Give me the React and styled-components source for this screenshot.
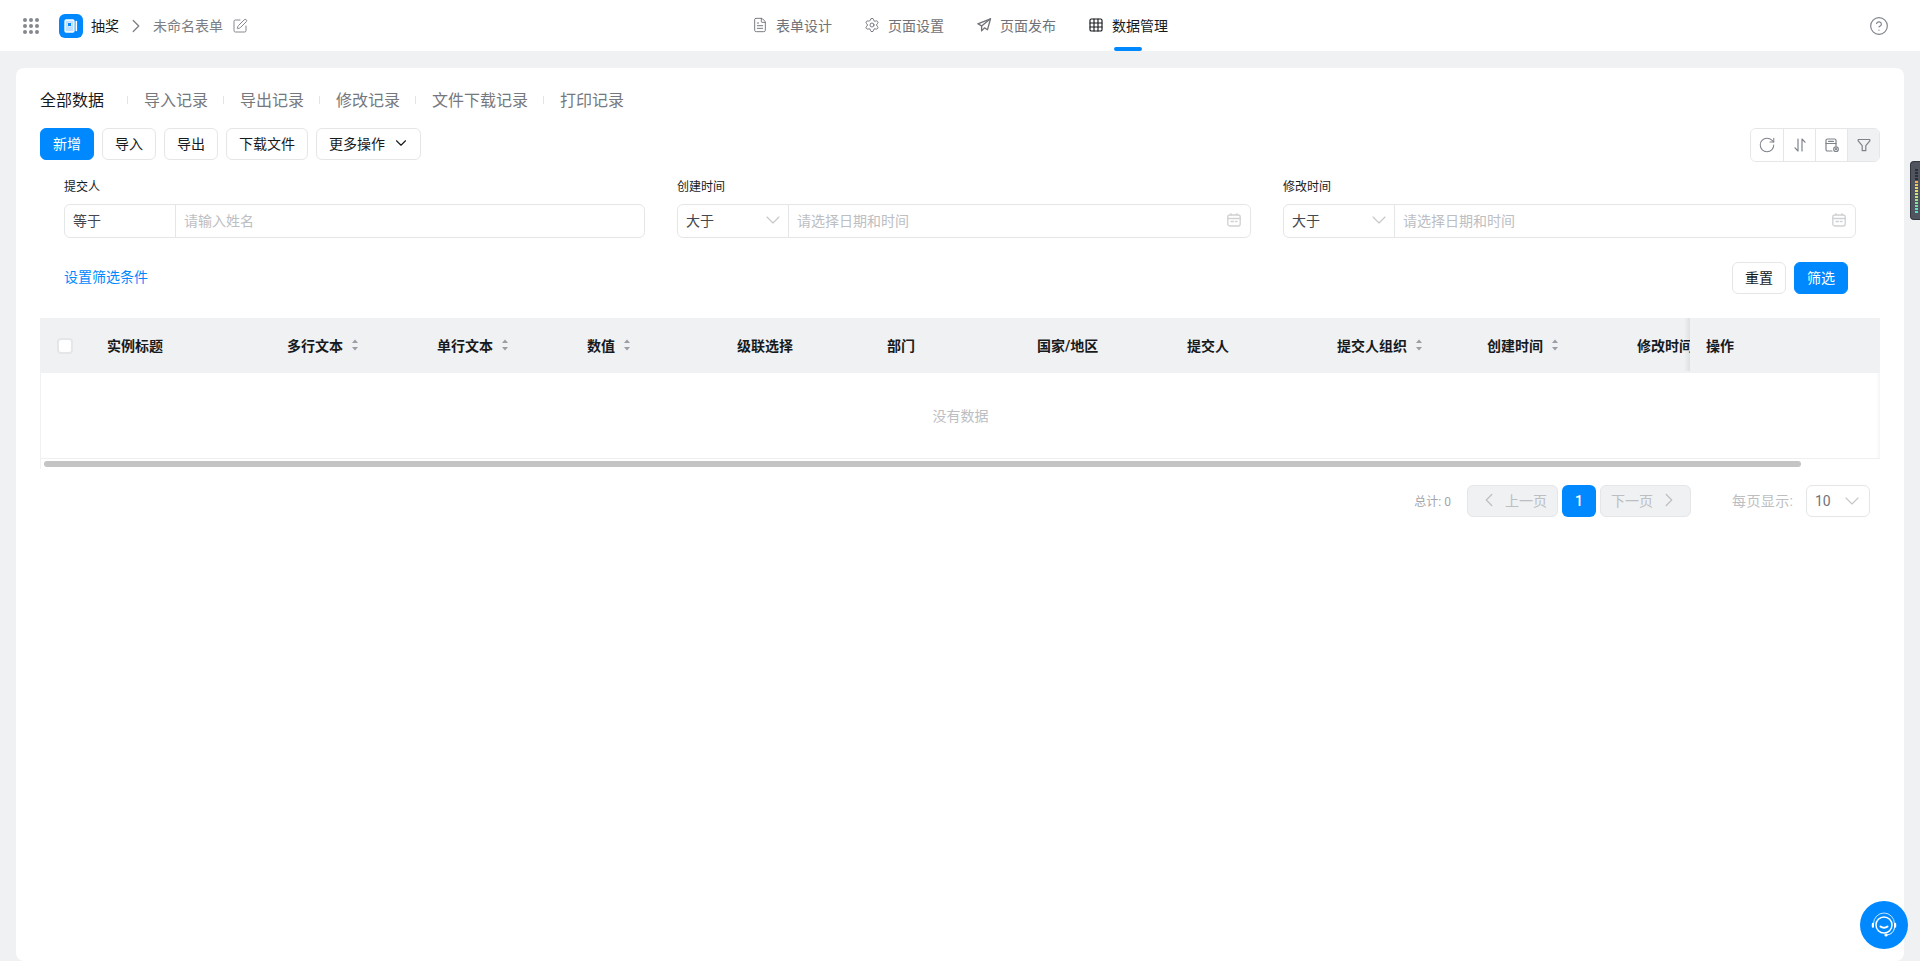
import React from 'react'
import styled, { createGlobalStyle } from 'styled-components'
import { ChevronDown, ChevronLeft, ChevronRight, CircleHelp, FileText, Grid3x3, RotateCw, Settings, SquarePen } from 'lucide-react'

const GlobalStyle = createGlobalStyle`
  html, body {
    margin: 0;
    height: 100%;
    overflow: hidden;
  }
  body {
    font-family: Roboto, "Noto Sans CJK SC", sans-serif;
    font-size: 14px;
    color: #171a1d;
  }
  * {
    box-sizing: border-box;
  }
`

const Page = styled.div`
  position: relative;
  height: 961px;
  display: flex;
  flex-direction: column;
  background: #f0f1f3;
`

const TopBar = styled.header`
  flex: 0 0 51px;
  display: grid;
  grid-template-columns: 1fr auto 1fr;
  align-items: center;
  padding: 0 23px;
  background: #fff;
`

const Crumbs = styled.div`
  display: flex;
  align-items: center;
`

const AppsGrid = styled.div`
  display: grid;
  grid-template-columns: repeat(3, 4px);
  gap: 2px;
  margin-right: 20px;

  span {
    width: 4px;
    height: 4px;
    border-radius: 50%;
    background: #85888e;
  }
`

const Logo = styled.div`
  width: 24px;
  height: 24px;
  display: flex;
  border-radius: 6px;
  background: #0089ff;
  margin-right: 8px;
`

const AppName = styled.span`
  padding-bottom: 2px;
  color: #171a1d;
`

const FormName = styled.span`
  padding-bottom: 2px;
  margin-right: 9px;
  color: #7c7f85;
`

const Nav = styled.nav`
  display: flex;
  gap: 32px;
  height: 51px;
`

const NavItem = styled.a`
  position: relative;
  display: flex;
  align-items: center;
  gap: 8px;
  padding-bottom: 1px;
  color: ${(p) => (p.$active ? '#171a1d' : '#6f7278')};

  &::after {
    content: '';
    display: ${(p) => (p.$active ? 'block' : 'none')};
    position: absolute;
    left: 26px;
    bottom: 0;
    width: 28px;
    height: 4px;
    border-radius: 2px;
    background: #0089ff;
  }
`

const HelpSlot = styled.div`
  display: flex;
  justify-content: flex-end;
  padding-right: 8px;
  color: #7f838a;
`

const Card = styled.main`
  flex: 1;
  margin: 17px 16px 0;
  padding: 20px 24px 0;
  border-radius: 8px;
  background: #fff;
`

const Tabs = styled.div`
  display: flex;
  align-items: center;
  height: 24px;
  padding-bottom: 3px;
  margin-bottom: 16px;
`

const Tab = styled.span`
  font-size: 16px;
  color: ${(p) => (p.$active ? '#171a1d' : '#75787e')};
`

const TabDivider = styled.i`
  width: 1px;
  height: 8px;
  margin: 3px 16px 0 ${(p) => (p.$first ? 23 : 15)}px;
  background: #e3e4e6;
`

const Toolbar = styled.div`
  display: flex;
  justify-content: space-between;
  align-items: flex-start;
  height: 34px;
`

const ButtonRow = styled.div`
  display: flex;
  gap: 8px;
`

const Button = styled.button`
  height: 32px;
  min-width: 54px;
  display: inline-flex;
  align-items: center;
  justify-content: center;
  gap: 7px;
  padding: 0 ${(p) => (p.$menu ? 10 : 12)}px 2px 12px;
  font: inherit;
  border-radius: 6px;
  border: 1px solid ${(p) => (p.$primary ? '#0089ff' : '#e5e6e8')};
  background: ${(p) => (p.$primary ? '#0089ff' : '#fff')};
  color: ${(p) => (p.$primary ? '#fff' : '#171a1d')};
`

const IconGroup = styled.div`
  display: flex;
  height: 34px;
  border: 1px solid #e5e6e8;
  border-radius: 6px;
  overflow: hidden;
`

const IconCell = styled.div`
  width: 32px;
  display: flex;
  align-items: center;
  justify-content: center;
  color: #7f838a;
  background: ${(p) => (p.$active ? '#f0f1f3' : '#fff')};

  & + & {
    border-left: 1px solid #e5e6e8;
  }
`

const FilterGrid = styled.div`
  display: grid;
  grid-template-columns: 581px 574px 573px;
  column-gap: 32px;
  margin: 16px 24px 0;
`

const FieldLabel = styled.label`
  display: block;
  height: 18px;
  margin-bottom: 8px;
  font-size: 12px;
  line-height: 18px;
  color: #171a1d;
`

const FieldBox = styled.div`
  display: flex;
  height: 34px;
  border: 1px solid #e5e6e8;
  border-radius: 6px;
`

const Operator = styled.div`
  flex: 0 0 111px;
  display: flex;
  align-items: center;
  justify-content: space-between;
  padding: 0 3px 2px 8px;
  border-right: 1px solid #e5e6e8;
  color: #44474d;
`

const Placeholder = styled.div`
  flex: 1;
  display: flex;
  align-items: center;
  justify-content: space-between;
  padding: 0 8px 2px;
  color: #bcbec2;
`

const FilterActions = styled.div`
  display: flex;
  justify-content: space-between;
  align-items: center;
  margin: 24px 32px 0 24px;
`

const FilterLink = styled.a`
  padding-bottom: 4px;
  color: #0089ff;
`

const TableWrap = styled.div`
  margin-top: 24px;
`

const TableHead = styled.div`
  display: flex;
  height: 55px;
  background: #f0f1f3;
  font-weight: 600;
`

const ScrollHead = styled.div`
  flex: 1;
  min-width: 0;
  display: flex;
  overflow: hidden;
`

const CheckCell = styled.div`
  flex: 0 0 51px;
  display: flex;
  align-items: center;
  padding-left: 17px;
`

const CheckBox = styled.span`
  width: 16px;
  height: 16px;
  border: 2px solid #e5e6e8;
  border-radius: 4px;
  background: #fff;
`

const HeadCell = styled.div`
  flex: 0 0 ${(p) => p.$width}px;
  display: flex;
  align-items: center;
  gap: 9px;
  padding: 0 0 2px 16px;
  white-space: nowrap;
`

const FixedHead = styled.div`
  position: relative;
  flex: 0 0 190px;
  display: flex;
  align-items: center;
  padding: 0 0 2px 16px;

  &::before {
    content: '';
    position: absolute;
    left: -6px;
    top: 0;
    bottom: 2px;
    width: 6px;
    background: linear-gradient(to right, rgba(0, 0, 0, 0), rgba(0, 0, 0, 0.07));
  }
`

const EmptyBody = styled.div`
  position: relative;
  height: 86px;
  display: flex;
  align-items: center;
  justify-content: center;
  padding-bottom: 2px;
  border-left: 1px solid #f0f1f3;
  border-bottom: 1px solid #eeeff1;
  color: #bcbec2;

  &::after {
    content: '';
    position: absolute;
    right: 0;
    top: 0;
    bottom: 0;
    width: 4px;
    background: linear-gradient(to right, rgba(0, 0, 0, 0), rgba(0, 0, 0, 0.04));
  }
`

const ScrollTrack = styled.div`
  height: 10px;
  padding: 2px 3px;
  border-left: 1px solid #f0f1f3;
`

const ScrollThumb = styled.div`
  width: 1757px;
  height: 6px;
  border-radius: 3px;
  background: #c4c4c4;
`

const Pager = styled.div`
  display: flex;
  justify-content: flex-end;
  align-items: center;
  gap: 4px;
  margin-top: 16px;
  padding-right: 10px;
`

const PagerTotal = styled.span`
  margin-right: 12px;
  padding-bottom: 2px;
  font-size: 12px;
  color: #a3a5a9;
`

const PagerStep = styled.div`
  width: 91px;
  height: 32px;
  display: flex;
  align-items: center;
  justify-content: center;
  gap: 5px;
  padding-bottom: 2px;
  border: 1px solid #e5e6e8;
  border-radius: 6px;
  background: #f0f1f3;
  color: #bcbec2;
`

const PagerCurrent = styled.div`
  width: 34px;
  height: 32px;
  display: flex;
  align-items: center;
  justify-content: center;
  padding-bottom: 1px;
  border-radius: 6px;
  background: #0089ff;
  color: #fff;
  font-weight: 500;
`

const PageSizeLabel = styled.span`
  width: 62px;
  margin: 0 8px 0 37px;
  padding-bottom: 2px;
  letter-spacing: 0.4px;
  color: #bcbec2;
`

const PageSize = styled.div`
  width: 64px;
  height: 32px;
  display: flex;
  align-items: center;
  justify-content: space-between;
  padding: 0 5px 1px 8px;
  border: 1px solid #e5e6e8;
  border-radius: 6px;
  color: #6f7278;
`

const Meter = styled.div`
  position: absolute;
  top: 161px;
  right: 0;
  width: 10px;
  height: 59px;
  display: flex;
  flex-direction: column;
  gap: 1px;
  padding: 7px 2px 0 4px;
  border: 1px solid #33363e;
  border-right: 0;
  border-radius: 4px 0 0 4px;
  background: #50545f;
`

const MeterBar = styled.i`
  height: 2px;
  background: ${(p) => p.$color};
`

const ChatBubble = styled.div`
  position: absolute;
  right: 12px;
  bottom: 12px;
  width: 48px;
  height: 48px;
  display: flex;
  align-items: center;
  justify-content: center;
  border-radius: 50%;
  background: #0089ff;
`

const columns = [
  { title: '实例标题', width: 180 },
  { title: '多行文本', sort: true },
  { title: '单行文本', sort: true },
  { title: '数值', sort: true },
  { title: '级联选择' },
  { title: '部门' },
  { title: '国家/地区' },
  { title: '提交人' },
  { title: '提交人组织', sort: true },
  { title: '创建时间', sort: true },
  { title: '修改时间', sort: true },
]

const meterColors = [
  '#2c2f37', '#2c2f37', '#2c2f37', '#2c2f37',
  '#efb04a', '#efc84e', '#ecd758', '#e6e064',
  '#cfe26c', '#b9e278', '#9fe288', '#86e29a',
  '#6fe2ac', '#5ce2bc', '#50e0c8',
]

const filters = [
  { label: '提交人', op: '等于', hint: '请输入姓名' },
  { label: '创建时间', op: '大于', hint: '请选择日期和时间', date: true },
  { label: '修改时间', op: '大于', hint: '请选择日期和时间', date: true },
]

const DocLogo = () => (
  <svg width="24" height="24" viewBox="0 0 24 24" fill="none">
    <rect x="6" y="6" width="9" height="12" rx="1.2" fill="#bfe0ff" stroke="#fff" strokeWidth="1.3" />
    <rect x="8.500" y="8.500" width="4" height="4" rx=".8" fill="#0089ff" stroke="#fff" strokeWidth=".8" />
    <path d="M17.300 7.500v9" stroke="#fff" strokeWidth="1.600" strokeLinecap="round" />
  </svg>
)

const PlaneIcon = () => (
  <svg width="16" height="16" viewBox="0 0 16 16" fill="none" stroke="currentColor" strokeWidth="1.3" strokeLinejoin="round" strokeLinecap="round">
    <path d="M14.500 1.800 1.800 6.800l3.800 2.100v5l2.900-3 3 1.800z" />
    <path d="M14.500 1.800 5.600 8.900" />
  </svg>
)

const SortIcon = () => (
  <svg width="16" height="16" viewBox="0 0 16 16" fill="none" stroke="currentColor" strokeWidth="1.2" strokeLinecap="round" strokeLinejoin="round">
    <path d="M6 2v12L3 10.800" />
    <path d="M10 14V2l3 3.200" />
  </svg>
)

const ColumnSetIcon = () => (
  <svg width="16" height="16" viewBox="0 0 16 16" fill="none" stroke="currentColor" strokeWidth="1.2" strokeLinecap="round" strokeLinejoin="round">
    <path d="M8 14H3.500A1.500 1.500 0 0 1 2 12.500V3.500A1.500 1.500 0 0 1 3.500 2h7A1.500 1.500 0 0 1 12 3.500V9" />
    <path d="M2 6.500h10" />
    <path d="M4.500 4.300h5" />
    <circle cx="12" cy="12.200" r="2.300" />
    <circle cx="12" cy="12.200" r=".5" />
  </svg>
)

const FunnelIcon = () => (
  <svg width="16" height="16" viewBox="0 0 16 16" fill="none" stroke="currentColor" strokeWidth="1.2" strokeLinejoin="round">
    <path d="M2.200 2.500h11.600v1.300L9.800 8.700v5H6.200v-5L2.200 3.800z" />
  </svg>
)

const CalendarIcon = () => (
  <svg width="16" height="16" viewBox="0 0 16 16" fill="none" stroke="#cfd1d4" strokeWidth="1.3" strokeLinecap="round">
    <rect x="1.800" y="3" width="12.400" height="11" rx="2" />
    <path d="M5 1.600V3M11 1.600V3M1.800 6.500h12.400M5 9.500h2.500M9.500 9.500h1.500" />
  </svg>
)

const SortCaret = () => (
  <svg width="6" height="12" viewBox="0 0 6 12" fill="#9a9da3">
    <path d="M3 0.500 6 4H0z" />
    <path d="M3 11.500 0 8h6z" />
  </svg>
)

const ChatIcon = () => (
  <svg width="32" height="32" viewBox="0 0 32 32" fill="none" stroke="#fff" strokeLinecap="round">
    <path d="M5.500 14.500a10.500 10.500 0 0 1 21 0" strokeWidth="1" opacity=".75" />
    <circle cx="16" cy="16" r="8" strokeWidth="1.500" />
    <path d="M12.500 17.500c1.800 1.600 5.200 1.600 7 0" strokeWidth="2" />
    <rect x="3.800" y="13.800" width="2.200" height="5" rx="1.100" fill="#fff" stroke="none" />
    <rect x="26" y="13.800" width="2.200" height="5" rx="1.100" fill="#fff" stroke="none" />
    <path d="M26.500 18.500c-.5 4.500-3.500 7-7.500 7.500" strokeWidth="1" />
    <circle cx="18" cy="26" r="1.600" fill="#fff" stroke="none" />
  </svg>
)

const App = () => {
  return (
    <Page>
      <GlobalStyle />
      <TopBar>
        <Crumbs>
          <AppsGrid>
            {Array.from({ length: 9 }, (_, i) => <span key={i} />)}
          </AppsGrid>
          <Logo><DocLogo /></Logo>
          <AppName>抽奖</AppName>
          <ChevronRight size={22} strokeWidth={1.4} color="#7c7f85" style={{ margin: '0 6px' }} />
          <FormName>未命名表单</FormName>
          <SquarePen size={16} strokeWidth={1.4} color="#7c7f85" />
        </Crumbs>
        <Nav>
          <NavItem><FileText size={16} strokeWidth={1.4} />表单设计</NavItem>
          <NavItem><Settings size={16} strokeWidth={1.4} />页面设置</NavItem>
          <NavItem><PlaneIcon />页面发布</NavItem>
          <NavItem $active><Grid3x3 size={16} strokeWidth={1.7} />数据管理</NavItem>
        </Nav>
        <HelpSlot><CircleHelp size={20} strokeWidth={1.4} /></HelpSlot>
      </TopBar>

      <Card>
        <Tabs>
          <Tab $active>全部数据</Tab>
          {['导入记录', '导出记录', '修改记录', '文件下载记录', '打印记录'].map((name, i) => (
            <React.Fragment key={name}>
              <TabDivider $first={i === 0} />
              <Tab>{name}</Tab>
            </React.Fragment>
          ))}
        </Tabs>

        <Toolbar>
          <ButtonRow>
            <Button $primary>新增</Button>
            <Button>导入</Button>
            <Button>导出</Button>
            <Button>下载文件</Button>
            <Button $menu>更多操作<ChevronDown size={18} strokeWidth={1.5} /></Button>
          </ButtonRow>
          <IconGroup>
            <IconCell><RotateCw size={18} strokeWidth={1.4} /></IconCell>
            <IconCell><SortIcon /></IconCell>
            <IconCell><ColumnSetIcon /></IconCell>
            <IconCell $active><FunnelIcon /></IconCell>
          </IconGroup>
        </Toolbar>

        <FilterGrid>
          {filters.map((f) => (
            <div key={f.label}>
              <FieldLabel>{f.label}</FieldLabel>
              <FieldBox>
                <Operator>
                  {f.op}
                  {f.date && <ChevronDown size={24} strokeWidth={1.1} color="#c4c6ca" />}
                </Operator>
                <Placeholder>
                  {f.hint}
                  {f.date && <CalendarIcon />}
                </Placeholder>
              </FieldBox>
            </div>
          ))}
        </FilterGrid>

        <FilterActions>
          <FilterLink>设置筛选条件</FilterLink>
          <ButtonRow>
            <Button>重置</Button>
            <Button $primary>筛选</Button>
          </ButtonRow>
        </FilterActions>

        <TableWrap>
          <TableHead>
            <ScrollHead>
              <CheckCell><CheckBox /></CheckCell>
              {columns.map((c) => (
                <HeadCell key={c.title} $width={c.width || 150}>
                  {c.title}
                  {c.sort && <SortCaret />}
                </HeadCell>
              ))}
            </ScrollHead>
            <FixedHead>操作</FixedHead>
          </TableHead>
          <EmptyBody>没有数据</EmptyBody>
          <ScrollTrack><ScrollThumb /></ScrollTrack>
        </TableWrap>

        <Pager>
          <PagerTotal>总计: 0</PagerTotal>
          <PagerStep><ChevronLeft size={22} strokeWidth={1.3} />上一页</PagerStep>
          <PagerCurrent>1</PagerCurrent>
          <PagerStep>下一页<ChevronRight size={22} strokeWidth={1.3} /></PagerStep>
          <PageSizeLabel>每页显示:</PageSizeLabel>
          <PageSize>10<ChevronDown size={24} strokeWidth={1.1} color="#c4c6ca" /></PageSize>
        </Pager>
      </Card>

      <Meter>
        {meterColors.map((color, i) => <MeterBar key={i} $color={color} />)}
      </Meter>
      <ChatBubble><ChatIcon /></ChatBubble>
    </Page>
  )
}

export default App
